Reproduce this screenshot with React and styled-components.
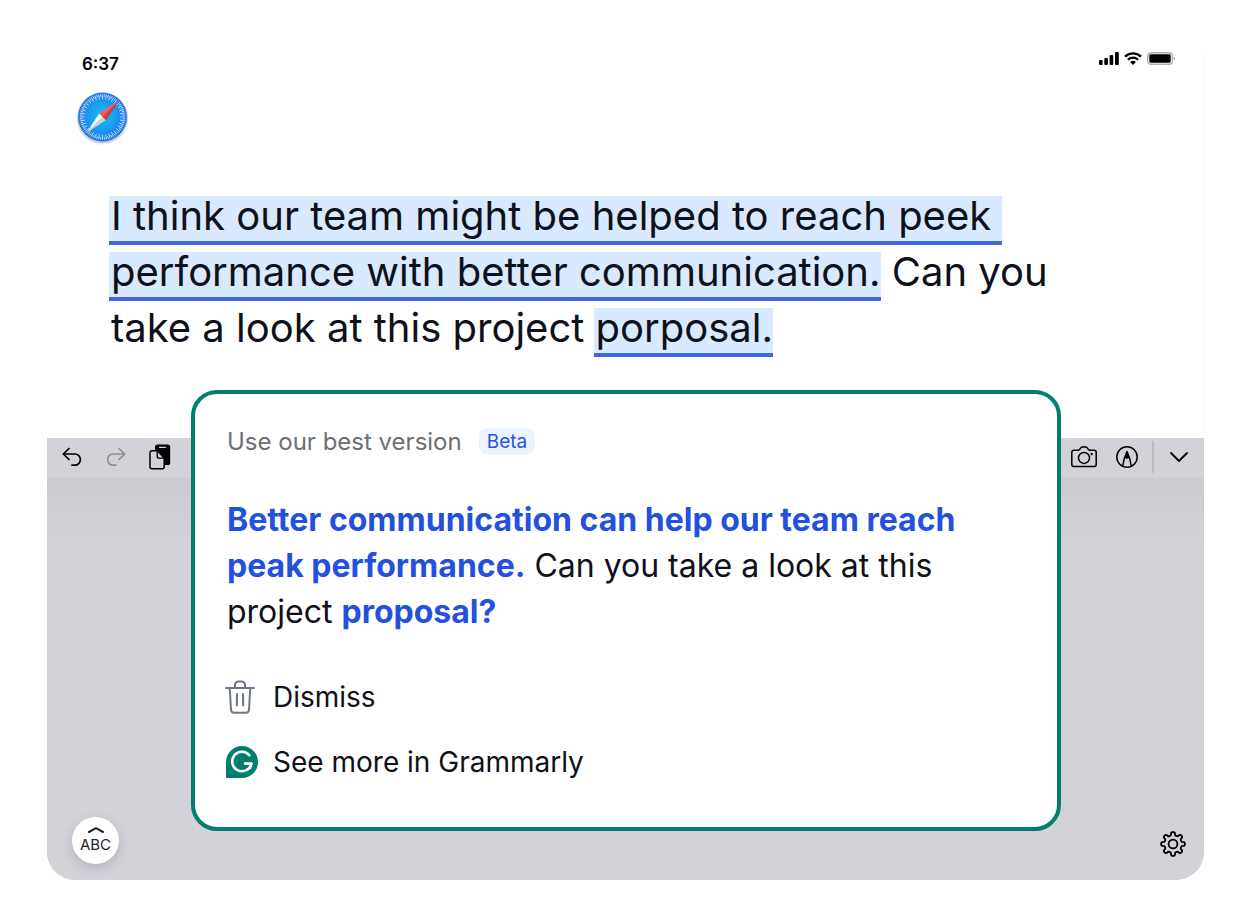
import styled, { createGlobalStyle } from "styled-components";

const GlobalStyle = createGlobalStyle`
  * {
    box-sizing: border-box;
  }

  body {
    margin: 0;
    background: #fff;
    color: #0e101a;
    font-family: "Inter", sans-serif;
  }

  svg {
    display: block;
    flex: none;
  }
`;

const Page = styled.main`
  padding: 52px 45px 35px 47px;
`;

const Screen = styled.div`
  border-radius: 0 0 28px 28px;
`;

const Document = styled.section`
  min-height: 386px;
  padding: 0 28px 0 29px;
  border-right: 1px solid #f6f6f6;
`;

const StatusBar = styled.div`
  display: flex;
  align-items: flex-start;
  justify-content: space-between;
  padding-left: 6px;
`;

const Clock = styled.time`
  color: #000;
  font-size: 17px;
  font-weight: 600;
  line-height: 24px;
`;

const StatusIcons = styled.div`
  display: flex;
  align-items: center;
  gap: 5px;
`;

const AppIcon = styled.div`
  margin-top: 15px;
`;

const Message = styled.p`
  margin: 43px 0 0;
  padding-left: 35px;
  font-size: 40px;
  line-height: 56px;
`;

const Mark = styled.mark`
  margin-left: -2px;
  padding: 0 0 1px 2px;
  border-bottom: 4px solid #4268e0;
  background: linear-gradient(transparent 5px, #d9e9ff 5px);
  color: inherit;
  -webkit-box-decoration-break: clone;
  box-decoration-break: clone;
`;

const Keyboard = styled.section`
  position: relative;
  border-radius: 0 0 28px 28px;
  background: #d2d3d9;
`;

const Toolbar = styled.div`
  display: flex;
  justify-content: space-between;
  height: 40px;
  padding: 0 13px 2px;
`;

const ToolGroup = styled.div`
  display: flex;
  align-items: center;
  gap: ${(props) => props.$gap || 20}px;
`;

const IconButton = styled.button`
  display: grid;
  place-items: center;
  width: 24px;
  height: 40px;
  padding: 0;
  border: 0;
  background: none;
  color: ${(props) => (props.disabled ? "#8f9095" : "#000")};
  cursor: pointer;
`;

const Divider = styled.span`
  width: 2px;
  height: 32px;
  background: #bbbcc1;
`;

const KeyArea = styled.div`
  display: flex;
  align-items: flex-end;
  justify-content: space-between;
  min-height: 402px;
  padding: 16px 20px 16px 25px;
  border-radius: 0 0 28px 28px;
  background: linear-gradient(#cacbd0, #d2d3d9 64px);
`;

const AbcButton = styled.button`
  display: flex;
  flex-direction: column;
  align-items: center;
  width: 47px;
  height: 47px;
  padding: 10px 0 0;
  border: 0;
  border-radius: 50%;
  background: #fff;
  box-shadow: 0 4px 12px rgba(60, 60, 80, 0.2);
  color: #1f2130;
  font-family: inherit;
  font-size: 15px;
  line-height: 24px;
  cursor: pointer;
`;

const Card = styled.article`
  position: absolute;
  top: -48px;
  left: 144px;
  right: 143px;
  padding: 32px 32px 45px;
  border: 4px solid #027e6f;
  border-radius: 26px;
  background: #fff;
`;

const CardHeader = styled.header`
  display: flex;
  align-items: center;
  gap: 17px;
`;

const CardTitle = styled.h2`
  margin: 0;
  color: #6d6f73;
  font-size: 24px;
  font-weight: 400;
  line-height: 31px;
`;

const Badge = styled.span`
  padding: 0 8px;
  border-radius: 9px;
  background: #eaf3ff;
  color: #2b54da;
  font-size: 19px;
  line-height: 27px;
`;

const Suggestion = styled.p`
  margin: 40px 0 0;
  font-size: 32px;
  line-height: 46px;

  strong {
    color: #2350dc;
    font-weight: 700;
  }
`;

const Actions = styled.div`
  display: flex;
  flex-direction: column;
  align-items: flex-start;
  gap: 25px;
  margin-top: 42px;
`;

const Action = styled.button`
  display: flex;
  align-items: center;
  gap: 15px;
  padding: 0;
  border: 0;
  background: none;
  color: inherit;
  font-family: inherit;
  font-size: 28px;
  line-height: 40px;
  cursor: pointer;
`;

const ActionIcon = styled.span`
  margin-left: -1px;
`;

const SignalIcon = () => (
  <svg width="20" height="13" viewBox="0 0 20 13" aria-hidden="true">
    <rect x="0" y="8" width="3.6" height="5" rx="1" />
    <rect x="5.3" y="6" width="3.6" height="7" rx="1" />
    <rect x="10.6" y="3" width="3.6" height="10" rx="1" />
    <rect x="16" y="0" width="3.8" height="13" rx="1" />
  </svg>
);

const WifiIcon = () => (
  <svg width="18" height="13" viewBox="0 0 18 13" aria-hidden="true">
    <g fill="none" stroke="#000" strokeWidth="2.3">
      <path d="M1 4.6a11.4 11.4 0 0 1 16 0" />
      <path d="M3.9 7.7a7.2 7.2 0 0 1 10.2 0" />
    </g>
    <path d="M9 13 6.1 10.1a4.2 4.2 0 0 1 5.8 0Z" />
  </svg>
);

const BatteryIcon = () => (
  <svg width="28" height="13" viewBox="0 0 28 13" aria-hidden="true">
    <rect
      x="0.7"
      y="0.7"
      width="24.6"
      height="11.6"
      rx="3.2"
      fill="none"
      stroke="#b0b0b0"
      strokeWidth="1.4"
    />
    <rect x="2.3" y="2.3" width="21.4" height="8.4" rx="1.4" />
    <path d="M26.6 4.5v4c1.8-.8 1.8-3.2 0-4Z" fill="#b0b0b0" />
  </svg>
);

const ticks = Array.from({ length: 72 }, (_, index) => index);

const CompassIcon = () => (
  <svg width="53" height="54" viewBox="0 0 52 53" role="img" aria-label="Safari">
    <defs>
      <radialGradient id="dial" cx="50%" cy="48%" r="52%">
        <stop offset="0" stopColor="#12c0f0" />
        <stop offset="0.55" stopColor="#1a9cf0" />
        <stop offset="1" stopColor="#1d6fe8" />
      </radialGradient>
      <linearGradient id="rim" x1="0" y1="0" x2="0" y2="1">
        <stop offset="0" stopColor="#f3f3f4" />
        <stop offset="1" stopColor="#c9c9cc" />
      </linearGradient>
    </defs>
    <circle cx="26" cy="27.4" r="25.4" fill="#000" opacity="0.07" />
    <circle cx="26" cy="26" r="25.2" fill="url(#rim)" />
    <circle cx="26" cy="25.5" r="24" fill="url(#dial)" />
    <g stroke="#fff" strokeWidth="0.8" opacity="0.85">
      {ticks.map((tick) => (
        <path
          key={tick}
          d={tick % 2 ? "M26 3.2v2.6" : "M26 3.2v4.8"}
          transform={`rotate(${tick * 5} 26 25.5)`}
        />
      ))}
    </g>
    <path d="M11.6 40.2 43 9.6 29.4 29.2Z" fill="#0b4fa8" opacity="0.3" />
    <path d="M42.4 9.2 22.7 22.2 26 25.5Z" fill="#ff5a52" />
    <path d="M42.4 9.2 29.3 28.8 26 25.5Z" fill="#d83b3c" />
    <path d="M10.4 41 22.7 22.2 26 25.5Z" fill="#fff" />
    <path d="M10.4 41 29.3 28.8 26 25.5Z" fill="#cfd3d8" />
  </svg>
);

const UndoIcon = ({ flipped }) => (
  <svg
    width="20"
    height="20"
    viewBox="0 0 20 20"
    fill="none"
    stroke="currentColor"
    strokeWidth="1.7"
    strokeLinecap="round"
    strokeLinejoin="round"
    aria-hidden="true"
  >
    <g transform={flipped ? "matrix(-1 0 0 1 20 0)" : undefined}>
      <path d="M7 1.5 1.3 7 7 12.5M1.5 7h11.3a5.6 5.6 0 0 1 0 11.2H10" />
    </g>
  </svg>
);

const PasteIcon = () => (
  <svg width="22" height="26" viewBox="0 0 22 26" aria-hidden="true">
    <rect x="6" y="0.6" width="15.2" height="20.4" rx="2.6" fill="#000" />
    <path d="M10.5 3.4h6" stroke="#d2d3d9" strokeWidth="1.2" strokeLinecap="round" />
    <path
      d="M3 6.7h5.2l7 7.4v8.7a2 2 0 0 1-2 2H3a2 2 0 0 1-2-2V8.7a2 2 0 0 1 2-2Z"
      fill="#d2d3d9"
      stroke="#000"
      strokeWidth="1.5"
    />
    <path
      d="M8.2 7.2v5a2 2 0 0 0 2 2h4.8"
      fill="none"
      stroke="#000"
      strokeWidth="1.3"
    />
  </svg>
);

const CameraIcon = () => (
  <svg
    width="26"
    height="22"
    viewBox="0 0 26 22"
    fill="none"
    stroke="currentColor"
    strokeWidth="1.5"
    strokeLinejoin="round"
    aria-hidden="true"
  >
    <path d="M2.8 4.2h4.6c.9 0 1.2-.6 1.7-1.4.6-1 1.1-1.8 2.1-1.8h3.6c1 0 1.5.8 2.1 1.8.5.8.8 1.4 1.7 1.4h4.6a2 2 0 0 1 2 2v12.2a2 2 0 0 1-2 2H2.8a2 2 0 0 1-2-2V6.2a2 2 0 0 1 2-2Z" />
    <circle cx="13" cy="11.9" r="5.5" />
    <circle cx="20.7" cy="8" r="1.2" fill="currentColor" stroke="none" />
  </svg>
);

const MarkupIcon = () => (
  <svg
    width="22"
    height="22"
    viewBox="0 0 22 22"
    fill="none"
    stroke="currentColor"
    strokeWidth="1.5"
    aria-hidden="true"
  >
    <circle cx="11" cy="11" r="10.2" />
    <path d="M6.7 20.2 8.2 12.8 11 5.5l2.8 7.3 1.5 7.4" strokeLinejoin="round" />
    <path
      d="M8.2 13 11 5.5 13.8 13l-1.5-.8-1.3.9-1.3-.9Z"
      fill="currentColor"
      stroke="none"
    />
  </svg>
);

const ChevronIcon = () => (
  <svg
    width="18"
    height="10"
    viewBox="0 0 18 10"
    fill="none"
    stroke="currentColor"
    strokeWidth="1.8"
    strokeLinecap="round"
    strokeLinejoin="round"
    aria-hidden="true"
  >
    <path d="M1 1l8 8 8-8" />
  </svg>
);

const CaretIcon = () => (
  <svg width="16" height="6" viewBox="0 0 16 6" aria-hidden="true">
    <path
      d="M1 5 8 1.2 15 5"
      fill="none"
      stroke="currentColor"
      strokeWidth="2"
      strokeLinecap="round"
      strokeLinejoin="round"
    />
  </svg>
);

// Outline of an eight-toothed cog, one tooth every 45 degrees
const cogPath = (() => {
  const profile = [
    [-22.5, 8.8],
    [-14, 9.4],
    [-9.5, 11.6],
    [-5, 12.3],
    [5, 12.3],
    [9.5, 11.6],
    [14, 9.4],
  ];
  const points = [];
  for (let tooth = 0; tooth < 8; tooth += 1) {
    profile.forEach(([offset, radius]) => {
      const angle = ((tooth * 45 + offset - 90) * Math.PI) / 180;
      const x = 13.5 + radius * Math.cos(angle);
      const y = 13.5 + radius * Math.sin(angle);
      points.push(`${x.toFixed(2)} ${y.toFixed(2)}`);
    });
  }
  return `M${points.join("L")}Z`;
})();

const CogIcon = () => (
  <svg
    width="26"
    height="26"
    viewBox="0 0 27 27"
    fill="none"
    stroke="currentColor"
    strokeWidth="1.9"
    strokeLinejoin="round"
    aria-hidden="true"
  >
    <path d={cogPath} />
    <circle cx="13.5" cy="13.5" r="4.6" />
  </svg>
);

const TrashIcon = () => (
  <svg
    width="32"
    height="34"
    viewBox="1 0 32 34"
    fill="none"
    stroke="#6d758d"
    strokeWidth="2"
    strokeLinecap="round"
    strokeLinejoin="round"
    overflow="visible"
    aria-hidden="true"
  >
    <path d="M1 8h28M10 8V4.8A3.3 3.3 0 0 1 13.3 1.5h3.4A3.3 3.3 0 0 1 20 4.8V8" />
    <path d="M4.7 8 6 29.5a3.5 3.5 0 0 0 3.5 3.3h11a3.5 3.5 0 0 0 3.5-3.3L25.3 8" />
    <path d="M11.9 14v11.5M18.1 14v11.5" />
  </svg>
);

const GrammarlyIcon = () => (
  <svg width="32" height="32" viewBox="0 0 32 32" aria-hidden="true">
    <path d="M0 32V16A16 16 0 1 1 16 32Z" fill="#027e6f" />
    <path
      d="M23.3 9.2A9.7 9.7 0 1 0 25.4 17.6H19"
      fill="none"
      stroke="#fff"
      strokeWidth="2.6"
      strokeLinecap="round"
      strokeLinejoin="round"
    />
    <path
      d="M25.4 17.6 24.3 22"
      stroke="#fff"
      strokeWidth="2.2"
      strokeLinecap="round"
    />
  </svg>
);

export default function App() {
  return (
    <Page>
      <GlobalStyle />
      <Screen>
        <Document>
          <StatusBar>
            <Clock>6:37</Clock>
            <StatusIcons>
              <SignalIcon />
              <WifiIcon />
              <BatteryIcon />
            </StatusIcons>
          </StatusBar>
          <AppIcon>
            <CompassIcon />
          </AppIcon>
          <Message>
            <Mark>
              I think our team might be helped to reach peek&nbsp;
              <br />
              performance with better communication.
            </Mark>{" "}
            Can you
            <br />
            take a look at this project <Mark>porposal.</Mark>
          </Message>
        </Document>
        <Keyboard>
          <Toolbar>
            <ToolGroup>
              <IconButton aria-label="Undo">
                <UndoIcon />
              </IconButton>
              <IconButton aria-label="Redo" disabled>
                <UndoIcon flipped />
              </IconButton>
              <IconButton aria-label="Paste">
                <PasteIcon />
              </IconButton>
            </ToolGroup>
            <ToolGroup $gap={13}>
              <ToolGroup>
                <IconButton aria-label="Camera">
                  <CameraIcon />
                </IconButton>
                <IconButton aria-label="Markup">
                  <MarkupIcon />
                </IconButton>
              </ToolGroup>
              <Divider />
              <IconButton aria-label="Hide keyboard">
                <ChevronIcon />
              </IconButton>
            </ToolGroup>
          </Toolbar>
          <KeyArea>
            <AbcButton>
              <CaretIcon />
              ABC
            </AbcButton>
            <IconButton aria-label="Settings">
              <CogIcon />
            </IconButton>
          </KeyArea>
          <Card>
            <CardHeader>
              <CardTitle>Use our best version</CardTitle>
              <Badge>Beta</Badge>
            </CardHeader>
            <Suggestion>
              <strong>
                Better communication can help our team reach
                <br />
                peak performance.
              </strong>{" "}
              Can you take a look at this
              <br />
              project <strong>proposal?</strong>
            </Suggestion>
            <Actions>
              <Action>
                <ActionIcon>
                  <TrashIcon />
                </ActionIcon>
                Dismiss
              </Action>
              <Action>
                <ActionIcon>
                  <GrammarlyIcon />
                </ActionIcon>
                See more in Grammarly
              </Action>
            </Actions>
          </Card>
        </Keyboard>
      </Screen>
    </Page>
  );
}
